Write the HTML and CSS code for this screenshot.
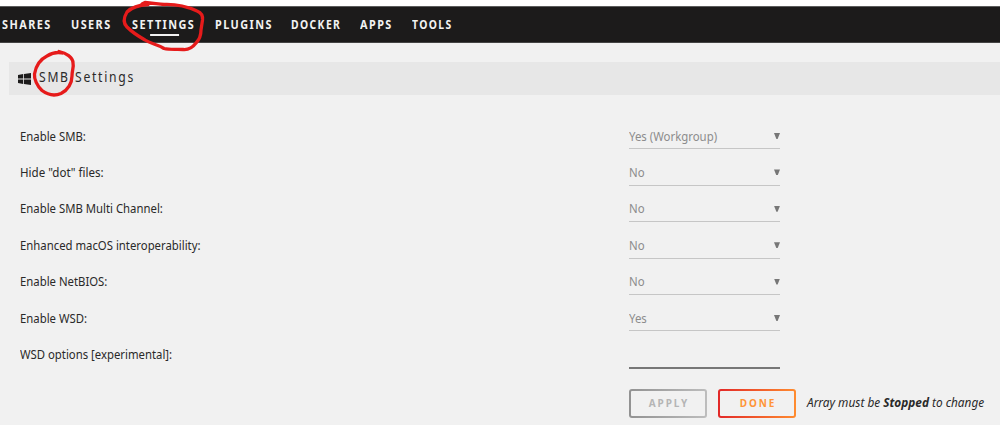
FILE: index.html
```
<!DOCTYPE html>
<html lang="en">
<head>
<meta charset="utf-8">
<title>SMB Settings</title>
<link rel="stylesheet" href="styles.css">
</head>
<body>
<nav class="menu">
  <a>SHARES</a><a>USERS</a><a class="active">SETTINGS</a><a>PLUGINS</a><a class="tight">DOCKER</a><a>APPS</a><a class="tight">TOOLS</a>
</nav>
<header class="title">
  <svg class="windows" viewBox="0 0 13 12" width="13" height="12"><path fill="#1c1b1b" d="M0 1.9 5.2 1.1V5.6H0ZM6 1 13 0V5.6H6ZM0 6.4H5.2V10.9L0 10.1ZM6 6.4H13V12L6 11Z"/></svg>
  <span class="smb">SMB</span><span class="rest">Settings</span>
</header>
<main class="form">
  <div class="row"><label>Enable SMB:</label><div class="select"><span>Yes (Workgroup)</span><i class="arrow"></i></div></div>
  <div class="row"><label class="wide">Hide "dot" files:</label><div class="select"><span>No</span><i class="arrow"></i></div></div>
  <div class="row"><label>Enable SMB Multi Channel:</label><div class="select"><span>No</span><i class="arrow"></i></div></div>
  <div class="row"><label>Enhanced macOS interoperability:</label><div class="select"><span>No</span><i class="arrow"></i></div></div>
  <div class="row"><label>Enable NetBIOS:</label><div class="select"><span>No</span><i class="arrow"></i></div></div>
  <div class="row"><label>Enable WSD:</label><div class="select"><span>Yes</span><i class="arrow"></i></div></div>
  <div class="row"><label>WSD options [experimental]:</label><div class="select input"></div></div>
  <div class="actions">
    <button class="button apply">APPLY</button>
    <button class="button done">DONE</button>
    <em class="note">Array must be <b>Stopped</b> to change</em>
  </div>
</main>
<svg class="marks" viewBox="0 0 1000 425" width="1000" height="425">
  <path d="M142 4L145 2.500C152 3 158 4 164 4.500C176 4 188 7 197 11C202 13 203 16 202.500 20L201 30C201 35 200 39 196 43C193 47 188 50 183 49.500C177 49 170 50 164 48.500C157 44 151 44 145 40C138 36 132 32 127 27C123 23 124 17 127 12C132 7 139 5 148 4.500"/>
  <path d="M59 51.500C66 53 73 57 73 63C74 67 72 70 72 76C72 83 68 90 61 93.500C55 96 48 95 42 90.500C37 86 34 79 34.500 74C36 65 41 59 47 56C52 53 58 52 62 53"/>
</svg>
</body>
</html>
```
FILE: styles.css
```
* { box-sizing: border-box; }
body {
  margin: 0;
  padding-top: 6px;
  height: 425px;
  overflow: hidden;
  background: linear-gradient(#fff 6px, #f1f1f1 6px);
  color: #2a2929;
  font: 12px/20px "Noto Sans", sans-serif;
}
.menu {
  display: grid;
  grid-template-columns: 69px 60.5px 83.5px 76px 69px 52px 60px;
  height: 37px;
  padding: 9px 0 0 2px;
  background: #1c1b1b;
  border-top: 1px solid #5c5c5c;
  border-bottom: 1px solid #444;
  color: #f2f2f2;
  font-size: 12px;
  font-weight: 700;
  letter-spacing: 1.6px;
}
.menu a {
  line-height: 18px;
  white-space: nowrap;
  transform: scaleX(.905);
  transform-origin: left;
}
.menu .tight { transform: scaleX(.865); }
.menu .active::after {
  content: "";
  display: block;
  width: 32px;
  height: 2px;
  margin-left: 20px;
  background: #f2f2f2;
}
.title {
  display: flex;
  align-items: center;
  height: 33px;
  margin: 19px 0 0 9px;
  padding-left: 9px;
  background: #e7e7e7;
  font-size: 13.5px;
}
.smb, .rest {
  padding-bottom: 3px;
  transform: scaleX(.9);
  transform-origin: left;
  letter-spacing: 1.9px;
}
.smb { margin-left: 8px; width: 35.5px; }
.form { padding: 23px 0 0 20px; }
.row { display: grid; grid-template-columns: 609px 151px; height: 36.4px; }
.row label {
  justify-self: start;
  padding-top: 8.6px;
  transform: scaleX(.945);
  transform-origin: left;
}
.row .wide { transform: scaleX(.965); }
.select {
  display: flex;
  justify-content: space-between;
  height: 31.4px;
  padding-top: 8.6px;
  border-bottom: 1px solid #c6c6c6;
  color: #8c8c8c;
}
.select span { transform: scaleX(.95); transform-origin: left; }
.input { height: 33px; border-bottom: 2px solid #777; }
.arrow {
  width: 6px;
  height: 6px;
  margin: 6.4px 0 0;
  background: #777;
  clip-path: polygon(0 0, 100% 0, 60% 100%, 40% 100%);
}
.actions { display: flex; align-items: center; padding: 16px 0 0 609px; }
.button {
  width: 78px;
  height: 29px;
  margin-right: 11px;
  padding: 0 0 0 2px;
  border: 2px solid transparent;
  border-radius: 3px;
  font: 700 10px/25px "Noto Sans", sans-serif;
  letter-spacing: 1.9px;
}
.apply {
  color: #b5b5b5;
  background: linear-gradient(#f1f1f1, #f1f1f1) padding-box, linear-gradient(90deg, #929292, #bdbdbd) border-box;
}
.done {
  color: #ff9438;
  background: linear-gradient(#f1f1f1, #f1f1f1) padding-box, linear-gradient(90deg, #e22828, #ff8c2f) border-box;
}
.note { white-space: nowrap; transform: scaleX(.985); transform-origin: left; }
.marks { position: absolute; left: 0; top: 0; }
.marks path { fill: none; stroke: #e61b1b; stroke-width: 3.3; stroke-linecap: round; stroke-linejoin: round; }
```
